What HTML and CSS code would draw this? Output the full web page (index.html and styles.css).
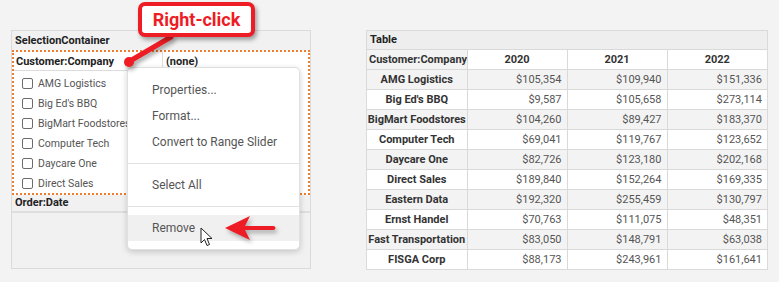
FILE: index.html
```html
<!DOCTYPE html>
<html lang="en">
<head>
  <meta charset="UTF-8">
  <title>Selection Container</title>
  <link rel="stylesheet" href="styles.css">
</head>
<body>

<div class="screen">
  <div class="panel selection">
    <div class="panel-title">SelectionContainer</div>

    <div class="filter active">
      <div class="filter-head">
        <div class="filter-name">Customer:Company</div>
        <div class="filter-value">(none)</div>
      </div>
      <ul class="filter-list">
        <li><span class="box"></span>AMG Logistics</li>
        <li><span class="box"></span>Big Ed's BBQ</li>
        <li><span class="box"></span>BigMart Foodstores</li>
        <li><span class="box"></span>Computer Tech</li>
        <li><span class="box"></span>Daycare One</li>
        <li><span class="box"></span>Direct Sales</li>
      </ul>
    </div>

    <div class="filter-row">Order:Date</div>
  </div>

  <div class="panel table-panel">
    <div class="panel-title">Table</div>
    <table class="grid">
      <tr class="head">
        <th class="corner">Customer:Company</th>
        <th>2020</th>
        <th>2021</th>
        <th>2022</th>
      </tr>
      <tr class="odd"><th>AMG Logistics</th><td>$105,354</td><td>$109,940</td><td>$151,336</td></tr>
      <tr><th>Big Ed's BBQ</th><td>$9,587</td><td>$105,658</td><td>$273,114</td></tr>
      <tr class="odd"><th>BigMart Foodstores</th><td>$104,260</td><td>$89,427</td><td>$183,370</td></tr>
      <tr><th>Computer Tech</th><td>$69,041</td><td>$119,767</td><td>$123,652</td></tr>
      <tr class="odd"><th>Daycare One</th><td>$82,726</td><td>$123,180</td><td>$202,168</td></tr>
      <tr><th>Direct Sales</th><td>$189,840</td><td>$152,264</td><td>$169,335</td></tr>
      <tr class="odd"><th>Eastern Data</th><td>$192,320</td><td>$255,459</td><td>$130,797</td></tr>
      <tr><th>Ernst Handel</th><td>$70,763</td><td>$111,075</td><td>$48,351</td></tr>
      <tr class="odd"><th>Fast Transportation</th><td>$83,050</td><td>$148,791</td><td>$63,038</td></tr>
      <tr><th>FISGA Corp</th><td>$88,173</td><td>$243,961</td><td>$161,641</td></tr>
    </table>
  </div>

  <!-- right-click menu -->
  <div class="menu">
    <div class="item">Properties...</div>
    <div class="item">Format...</div>
    <div class="item">Convert to Range Slider</div>
    <div class="sep"></div>
    <div class="item">Select All</div>
    <div class="sep"></div>
    <div class="item hover">Remove</div>
  </div>

  <!-- annotations -->
  <svg class="pointer" width="70" height="50" viewBox="0 0 70 50">
    <line x1="48" y1="8" x2="7" y2="32" stroke="#ee1c24" stroke-width="5" stroke-linecap="round"/>
    <circle cx="6" cy="33" r="5" fill="#ee1c24"/>
  </svg>
  <div class="callout">Right-click</div>

  <svg class="arrow" width="70" height="30" viewBox="0 0 70 30">
    <path d="M8 15 L33 3 L28 13 L57 13 Q60 15 57 17 L28 17 L33 27 Z" fill="#ee1c24"/>
  </svg>

  <svg class="cursor" width="14" height="20" viewBox="0 0 14 20">
    <path d="M1 1 L1 16 L4.5 12.5 L7 18.5 L9.5 17.5 L7 11.5 L12 11.5 Z" fill="#fff" stroke="#222" stroke-width="1" stroke-linejoin="round"/>
  </svg>
</div>

</body>
</html>
```

FILE: styles.css
```css
body {
  margin: 0;
  background: #f3f3f3;
  font-family: Roboto, 'Liberation Sans', sans-serif;
  color: #333;
}

.screen {
  position: relative;
  width: 779px;
  height: 282px;
  display: flex;
  align-items: flex-start;
  gap: 55px;
  padding: 30px 0 0 11px;
  box-sizing: border-box;
}

.panel {
  border: 1px solid #dadada;
  background: #f1f1f1;
  box-sizing: border-box;
}

.panel-title {
  height: 19px;
  line-height: 19px;
  padding-left: 3px;
  font-size: 11px;
  font-weight: bold;
  color: #222;
}

/* selection container */
.selection {
  width: 300px;
  height: 239px;
}

.filter.active {
  border: 2px dotted #ef7d2d;
  background: #fff;
}

.filter-head {
  display: flex;
  height: 19px;
  line-height: 19px;
  font-size: 11px;
  font-weight: bold;
  color: #222;
}

.filter-name {
  width: 146px;
  padding-left: 2px;
  border-right: 1px solid #dcdcdc;
  border-bottom: 1px solid #dcdcdc;
}

.filter-value {
  padding-left: 3px;
}

.filter-list {
  list-style: none;
  margin: 0;
  padding: 2px 0 0 8px;
}

.filter-list li {
  display: flex;
  align-items: center;
  height: 20px;
  font-size: 10.5px;
  color: #555;
}

.box {
  width: 9px;
  height: 9px;
  border: 1.5px solid #6b6b6b;
  border-radius: 2px;
  background: #fff;
  margin-right: 5px;
}

.filter-row {
  height: 16px;
  line-height: 16px;
  padding-left: 3px;
  font-size: 11px;
  font-weight: bold;
  color: #222;
  border-bottom: 2px solid #dedede;
}

/* table */
.table-panel {
  width: 402px;
  height: 240px;
}

.table-panel .panel-title {
  height: 18px;
  line-height: 18px;
  background: #eeeeee;
}

.grid {
  width: 400px;
  border-collapse: collapse;
  table-layout: fixed;
  background: #fff;
  font-size: 11px;
}

.grid th,
.grid td {
  height: 19px;
  padding: 0;
  border-top: 1px solid #d9d9d9;
  border-left: 1px solid #d9d9d9;
  white-space: nowrap;
  overflow: hidden;
}

.grid tr > :first-child {
  border-left: none;
}

.grid th {
  font-weight: bold;
  color: #333;
  text-align: center;
}

.grid td {
  text-align: right;
  padding-right: 5px;
  color: #555;
}

.grid .corner {
  text-align: left;
  padding-left: 2px;
  background: #f3f3f3;
}

.grid tr.odd th,
.grid tr.odd td {
  background: #f3f3f3;
}

/* context menu */
.menu {
  position: absolute;
  left: 127px;
  top: 67px;
  width: 173px;
  padding: 9px 0 8px;
  background: #fff;
  border: 1px solid #e0e0e0;
  border-radius: 5px;
  box-shadow: 0 2px 6px rgba(0, 0, 0, 0.18);
  box-sizing: border-box;
  font-size: 12px;
  color: #555;
}

.menu .item {
  height: 26px;
  line-height: 26px;
  padding-left: 24px;
}

.menu .item.hover {
  background: #f0f0f0;
}

.menu .sep {
  height: 1px;
  margin: 8px 0;
  background: #e2e2e2;
}

/* annotations */
.callout {
  position: absolute;
  left: 138px;
  top: 2px;
  width: 117px;
  height: 35px;
  box-sizing: border-box;
  border: 4px solid #ee1c24;
  border-radius: 7px;
  background: #fff;
  box-shadow: 2px 3px 4px rgba(0, 0, 0, 0.35);
  color: #ee1c24;
  font-size: 18px;
  font-weight: bold;
  line-height: 27px;
  text-align: center;
}

.pointer {
  position: absolute;
  left: 123px;
  top: 29px;
  filter: drop-shadow(2px 3px 2px rgba(0, 0, 0, 0.35));
}

.arrow {
  position: absolute;
  left: 217px;
  top: 213px;
  filter: drop-shadow(2px 3px 2px rgba(0, 0, 0, 0.3));
}

.cursor {
  position: absolute;
  left: 200px;
  top: 227px;
}
```
